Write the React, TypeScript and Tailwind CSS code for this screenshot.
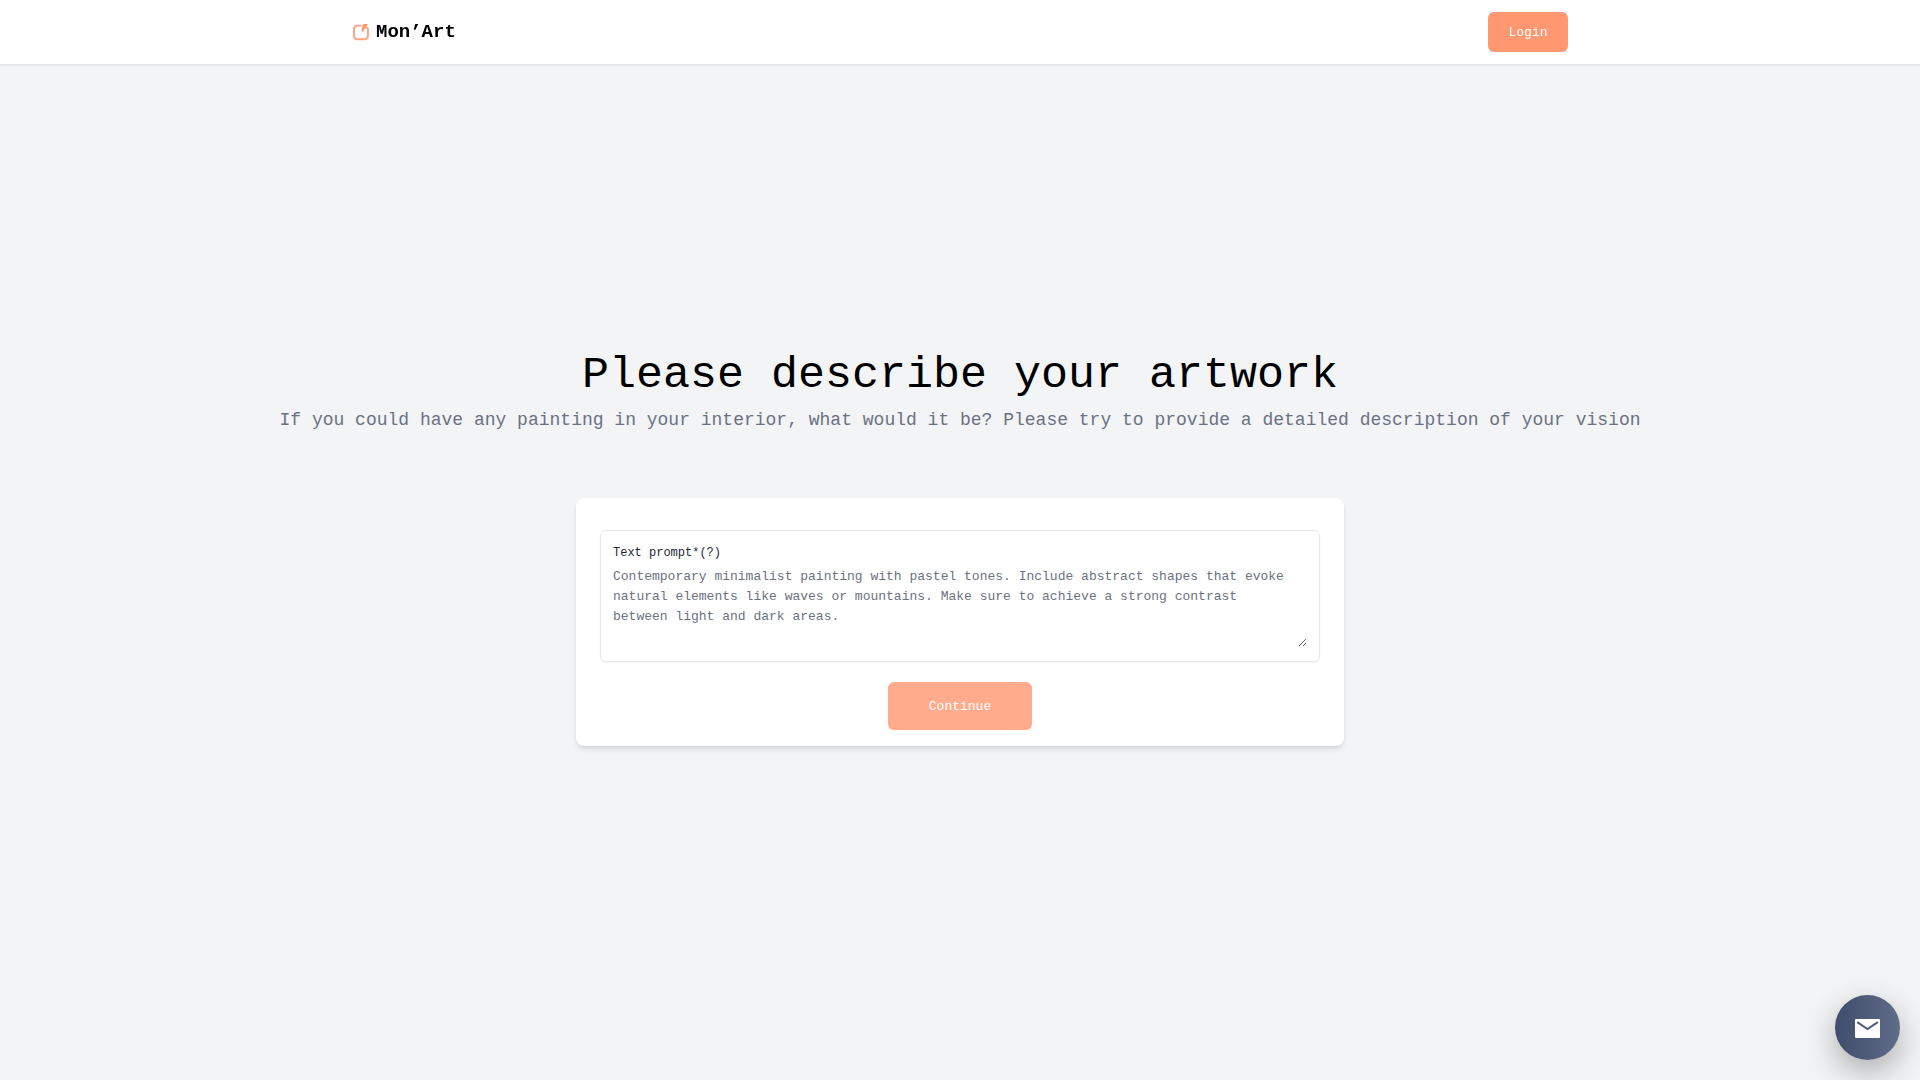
import React, { useState } from 'react';

const Logo = () => (
    <a href="#" className="flex items-center gap-1.5 text-black">
        <svg width="18" height="18" viewBox="0 0 18 18" fill="none" aria-hidden="true">
            <path
                d="M9.4 2.6H5.2A3.2 3.2 0 0 0 2 5.8V13A3.2 3.2 0 0 0 5.2 16.2H12.8A3.2 3.2 0 0 0 16 13V7C16 5.8 15.6 5 15 4.4"
                stroke="#ffa283"
                strokeWidth="1.9"
            />
            <path d="M11.2 1H15.8L14.3 5.6H13L10 10L9.6 6.6Z" fill="#ff9770" />
        </svg>
        <span className="text-[19px] leading-6 font-bold">Mon’Art</span>
    </a>
);

const ChatButton = () => (
    <button
        type="button"
        aria-label="Contact us"
        className="fixed right-5 bottom-5 flex size-[65px] items-center justify-center rounded-full bg-linear-to-r from-[#3f4c6b] to-[#606c88] pt-0.5 shadow-[0_12px_32px_rgba(0,0,0,0.3)]"
    >
        <svg width="25" height="19" viewBox="0 0 25 19" aria-hidden="true">
            <rect width="25" height="19" rx="1" fill="#fff" />
            <path d="M2.2 3.2L12.5 10L22.8 3.2" fill="none" stroke="#4f5b7a" strokeWidth="2" />
        </svg>
    </button>
);

export default function App() {
    const [prompt, setPrompt] = useState('');

    return (
        <div className="min-h-screen bg-gray-100 font-['Liberation_Mono',monospace]">
            <header className="fixed inset-x-0 top-0 border-b border-gray-200 bg-white shadow-xs">
                <div className="mx-auto flex h-16 max-w-7xl items-center justify-between px-8">
                    <Logo />
                    <button
                        type="button"
                        className="h-10 w-20 rounded-md bg-[#ff9770] pt-0.5 text-[13px] leading-5 font-medium text-white"
                    >
                        Login
                    </button>
                </div>
            </header>

            <main className="flex min-h-screen flex-col items-center justify-center pt-4">
                <h1 className="text-center text-[45px] leading-[52px] text-black">Please describe your artwork</h1>
                <p className="mt-1 text-center text-lg font-medium text-gray-500">
                    If you could have any painting in your interior, what would it be? Please try to provide a detailed description of your vision
                </p>

                <form
                    className="mt-16 flex w-full max-w-3xl flex-col items-center rounded-lg bg-white px-6 pt-8 pb-4 shadow-md"
                    onSubmit={(e) => e.preventDefault()}
                >
                    <div className="w-full rounded-md border border-gray-200 px-3 py-3.5 shadow-xs">
                        <label htmlFor="prompt" className="mb-1.5 block text-xs font-medium text-gray-800">
                            Text prompt*(?)
                        </label>
                        <textarea
                            id="prompt"
                            rows={4}
                            className="block w-full pr-3 text-[13px] leading-5 text-gray-900 placeholder:text-gray-500 focus:outline-none"
                            placeholder="Contemporary minimalist painting with pastel tones. Include abstract shapes that evoke natural elements like waves or mountains. Make sure to achieve a strong contrast between light and dark areas."
                            value={prompt}
                            onChange={(e) => setPrompt(e.target.value)}
                        />
                    </div>
                    <button
                        type="submit"
                        disabled={!prompt}
                        className="mt-5 h-12 w-36 rounded-md bg-[#ff9770] pt-0.5 text-[13px] leading-5 font-medium text-white disabled:opacity-80"
                    >
                        Continue
                    </button>
                </form>
            </main>

            <ChatButton />
        </div>
    );
}
